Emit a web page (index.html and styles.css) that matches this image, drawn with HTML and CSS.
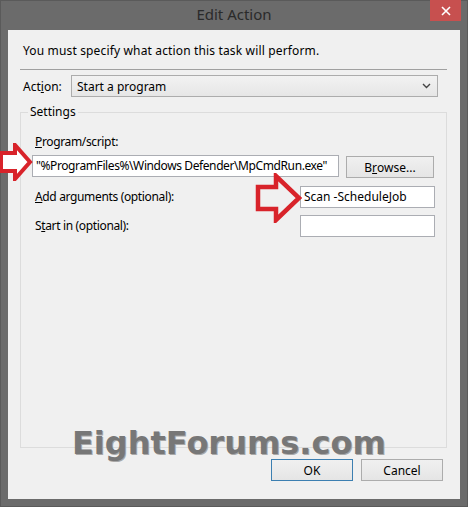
FILE: index.html
```html
<!DOCTYPE html>
<html>
<head>
<meta charset="utf-8">
<link rel="stylesheet" href="styles.css">
</head>
<body>
<div class="window">
  <div class="titlebar">
    <span class="title">Edit Action</span>
    <div class="close"><svg width="10" height="10" viewBox="0 0 10 10"><path d="M1 1 L9 9 M9 1 L1 9" stroke="#fff" stroke-width="1.6"/></svg></div>
  </div>
  <div class="client">
    <div class="intro">You must specify what action this task will perform.</div>
    <div class="sep"></div>
    <div class="action-row">
      <span class="action-label">Act<u>i</u>on:</span>
      <div class="combo"><span>Start a program</span><svg class="chev" width="9" height="6" viewBox="0 0 9 6"><path d="M1 1 L4.5 4.5 L8 1" fill="none" stroke="#444" stroke-width="1.4"/></svg></div>
    </div>
    <div class="group">
      <span class="legend">Settings</span>
      <div class="lbl prog-lbl"><u>P</u>rogram/script:</div>
      <div class="prog-row">
        <div class="input prog-input">"%ProgramFiles%\Windows Defender\MpCmdRun.exe"</div>
        <div class="btn browse">B<u>r</u>owse...</div>
      </div>
      <div class="field-row args-row">
        <span class="lbl"><u>A</u>dd arguments (optional):</span>
        <div class="input small-input">Scan -ScheduleJob</div>
      </div>
      <div class="field-row start-row">
        <span class="lbl">S<u>t</u>art in (optional):</span>
        <div class="input small-input"></div>
      </div>
    </div>
    <div class="buttons">
      <div class="btn ok">OK</div>
      <div class="btn cancel">Cancel</div>
    </div>
  </div>
  <div class="watermark">EightForums.com</div>
  <svg class="arrow arrow1" width="34" height="38" viewBox="0 0 34 38"><polygon points="2,10 16,10 16,2 31,19 16,36 16,28 2,28" fill="#fff" stroke="#d8232a" stroke-width="4" stroke-linejoin="miter"/></svg>
  <svg class="arrow arrow2" width="48" height="50" viewBox="0 0 48 50"><polygon points="3,14 21,14 21,3 44,25 21,47 21,36 3,36" fill="#f0f0f0" stroke="#d8232a" stroke-width="4.5" stroke-linejoin="miter"/></svg>
</div>
</body>
</html>
```
FILE: styles.css
```css
html, body {
  margin: 0;
  padding: 0;
}
body {
  width: 468px;
  height: 507px;
  overflow: hidden;
  background: #6b6b6b;
  font-family: "Noto Sans", "Open Sans", sans-serif;
  font-size: 12px;
  color: #000;
}
.window {
  position: relative;
  width: 468px;
  height: 507px;
  background: #6b6b6b;
  box-shadow: inset 0 0 0 1px #5a5a5a;
}
.titlebar {
  height: 30px;
  display: flex;
  justify-content: center;
  align-items: center;
  position: relative;
}
.title {
  font-size: 15px;
  color: #2a2a2a;
  margin-top: -2px;
}
.close {
  position: absolute;
  top: 0;
  right: 7px;
  width: 31px;
  height: 21px;
  background: #c7504f;
  display: flex;
  align-items: center;
  justify-content: center;
}
.client {
  margin: 0 8px;
  height: 469px;
  background: #f0f0f0;
  padding: 13px 13px 0 12px;
  box-sizing: border-box;
}
.intro {
  padding-left: 3px;
  line-height: 16px;
  height: 16px;
  letter-spacing: 0.15px;
}
.sep {
  margin-top: 10px;
  height: 1px;
  background: #a0a0a0;
}
.action-row {
  margin-top: 5px;
  height: 22px;
  display: flex;
  align-items: center;
}
.action-label {
  width: 48px;
  padding-left: 3px;
}
.combo {
  width: 367px;
  height: 22px;
  box-sizing: border-box;
  border: 1px solid #acacac;
  background: linear-gradient(#f2f2f2, #e6e6e6);
  display: flex;
  align-items: center;
  justify-content: space-between;
  padding: 0 6px 0 5px;
}
.chev {
  display: block;
}
.group {
  position: relative;
  margin-top: 15px;
  height: 336px;
  box-sizing: border-box;
  border: 1px solid #dcdcdc;
  padding: 0 12px 0 11px;
}
.legend {
  position: absolute;
  top: -9px;
  left: 7px;
  padding: 0 2px;
  background: #f0f0f0;
  line-height: 16px;
}
.lbl {
  line-height: 16px;
  padding-left: 3px;
  letter-spacing: -0.35px;
}
.prog-lbl {
  margin-top: 21px;
}
.prog-row {
  margin-top: 5px;
  display: flex;
  align-items: flex-start;
}
.input {
  height: 22px;
  box-sizing: border-box;
  border: 1px solid #abadb3;
  background: #fff;
  padding: 0 3px;
  line-height: 20px;
  white-space: nowrap;
  overflow: hidden;
}
.prog-input {
  width: 307px;
  letter-spacing: -0.4px;
}
.btn {
  height: 22px;
  box-sizing: border-box;
  border: 1px solid #acacac;
  background: linear-gradient(#f0f0f0, #e5e5e5);
  display: flex;
  align-items: center;
  justify-content: center;
}
.browse {
  margin-left: 7px;
  margin-top: 1px;
  width: 88px;
}
.field-row {
  display: flex;
  align-items: center;
  justify-content: space-between;
}
.args-row {
  margin-top: 8px;
}
.start-row {
  margin-top: 7px;
}
.small-input {
  width: 135px;
  margin-right: -1px;
}
.buttons {
  margin-top: 11px;
  display: flex;
  justify-content: flex-end;
  gap: 8px;
  padding-right: 4px;
}
.ok {
  width: 82px;
  border-color: #3c7fb1;
}
.cancel {
  width: 82px;
}
.watermark {
  position: absolute;
  left: 72px;
  top: 420px;
  font-family: "DejaVu Sans", sans-serif;
  font-weight: bold;
  font-size: 32px;
  line-height: 46px;
  color: #777;
  text-shadow: 1px 1px 0 #a8a8a8;
}
.arrow {
  position: absolute;
  display: block;
}
.arrow1 {
  left: -1px;
  top: 143px;
}
.arrow2 {
  left: 255px;
  top: 173px;
}
```
